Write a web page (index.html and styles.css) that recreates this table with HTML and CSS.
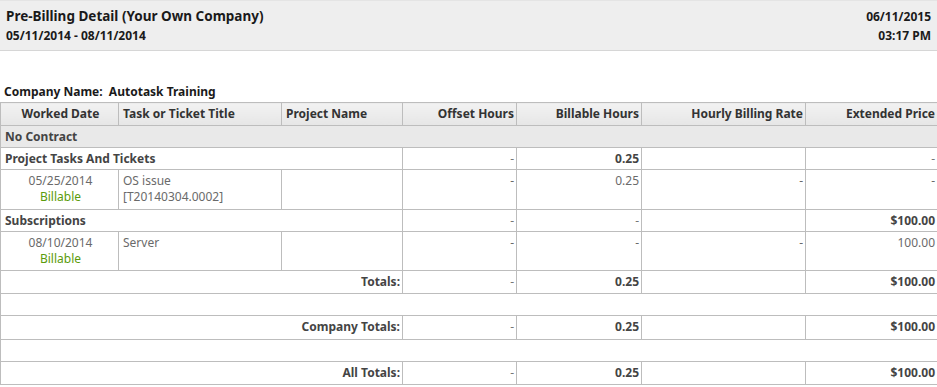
FILE: index.html
```html
<!DOCTYPE html>
<html>
<head>
<meta charset="utf-8">
<link rel="stylesheet" href="styles.css">
</head>
<body>
<div class="report-head">
  <div class="head-row">
    <span class="title">Pre-Billing Detail (Your Own Company)</span>
    <span>06/11/2015</span>
  </div>
  <div class="head-row">
    <span>05/11/2014 - 08/11/2014</span>
    <span>03:17 PM</span>
  </div>
</div>
<div class="company">Company Name:&nbsp; Autotask Training</div>
<table class="grid">
  <colgroup>
    <col class="c1"><col class="c2"><col class="c3"><col class="c4"><col class="c5"><col class="c6"><col class="c7">
  </colgroup>
  <thead>
    <tr>
      <th class="ctr">Worked Date</th>
      <th class="lft">Task or Ticket Title</th>
      <th class="lft">Project Name</th>
      <th>Offset Hours</th>
      <th>Billable Hours</th>
      <th>Hourly Billing Rate</th>
      <th>Extended Price</th>
    </tr>
  </thead>
  <tbody>
    <tr class="contract"><td colspan="7">No Contract</td></tr>
    <tr class="group">
      <td colspan="3" class="lft">Project Tasks And Tickets</td>
      <td class="num light">-</td>
      <td class="num">0.25</td>
      <td class="num"></td>
      <td class="num light">-</td>
    </tr>
    <tr class="item">
      <td class="ctr">05/25/2014<br><span class="billable">Billable</span></td>
      <td>OS issue<br>[T20140304.0002]</td>
      <td></td>
      <td class="num">-</td>
      <td class="num">0.25</td>
      <td class="num">-</td>
      <td class="num">-</td>
    </tr>
    <tr class="group">
      <td colspan="3" class="lft">Subscriptions</td>
      <td class="num light">-</td>
      <td class="num light">-</td>
      <td class="num"></td>
      <td class="num">$100.00</td>
    </tr>
    <tr class="item item-short">
      <td class="ctr">08/10/2014<br><span class="billable">Billable</span></td>
      <td>Server</td>
      <td></td>
      <td class="num">-</td>
      <td class="num">-</td>
      <td class="num">-</td>
      <td class="num price">100.00</td>
    </tr>
    <tr class="total">
      <td colspan="3">Totals:</td>
      <td class="light">-</td>
      <td>0.25</td>
      <td></td>
      <td>$100.00</td>
    </tr>
    <tr class="spacer"><td colspan="7"></td></tr>
    <tr class="total total-tall">
      <td colspan="3">Company Totals:</td>
      <td class="light">-</td>
      <td>0.25</td>
      <td></td>
      <td>$100.00</td>
    </tr>
    <tr class="spacer"><td colspan="7"></td></tr>
    <tr class="total">
      <td colspan="3">All Totals:</td>
      <td class="light">-</td>
      <td>0.25</td>
      <td></td>
      <td>$100.00</td>
    </tr>
  </tbody>
</table>
</body>
</html>
```
FILE: styles.css
```css
html, body {
  margin: 0;
  padding: 0;
  background: #ffffff;
}
body {
  font-family: "Noto Sans", "Open Sans", sans-serif;
  font-size: 12px;
  color: #333333;
}
.report-head {
  background: #eeeeee;
  border-top: 1px solid #e4e4e4;
  border-bottom: 1px solid #d6d6d6;
  padding: 6px 6px 5px 6px;
  height: 38px;
  font-weight: bold;
  color: #1a1a1a;
}
.head-row {
  display: flex;
  justify-content: space-between;
  line-height: 19px;
}
.title {
  font-size: 13.5px;
}
.company {
  margin-top: 31px;
  padding-left: 4px;
  font-weight: bold;
  line-height: 20px;
  color: #1a1a1a;
}
.grid {
  border-collapse: collapse;
  table-layout: fixed;
  width: 937px;
}
.c1 { width: 118px; }
.c2 { width: 163px; }
.c3 { width: 121px; }
.c4 { width: 114px; }
.c5 { width: 125px; }
.c6 { width: 164px; }
.c7 { width: 132px; }
.grid th, .grid td {
  border: 1px solid #bdbdbd;
  padding: 3px 2px 2px 4px;
  line-height: 16px;
  text-align: left;
}
.grid th {
  background: linear-gradient(#f2f2f2, #e6e6e6);
  font-weight: bold;
  text-align: right;
  color: #333333;
  padding: 3px 2px 3px 4px;
}
.grid th.ctr { text-align: center; }
.grid th.lft { text-align: left; }
.contract td {
  background: #e9e9e9;
  font-weight: bold;
  color: #444444;
}
.group td {
  font-weight: bold;
  color: #444444;
}
.item td {
  vertical-align: top;
  color: #6a6a6a;
  height: 34px;
}
.item-short td {
  height: 33px;
}
.grid td.ctr { text-align: center; }
.grid td.num { text-align: right; }
.grid td.light { font-weight: normal; color: #777777; }
.billable { color: #5b9b0c; }
.price { color: #6b6282; }
.total td {
  text-align: right;
  font-weight: bold;
  color: #444444;
  padding-top: 3px;
  padding-bottom: 3px;
}
.total-tall td {
  padding-bottom: 4px;
}
.spacer td {
  height: 16px;
}
```
